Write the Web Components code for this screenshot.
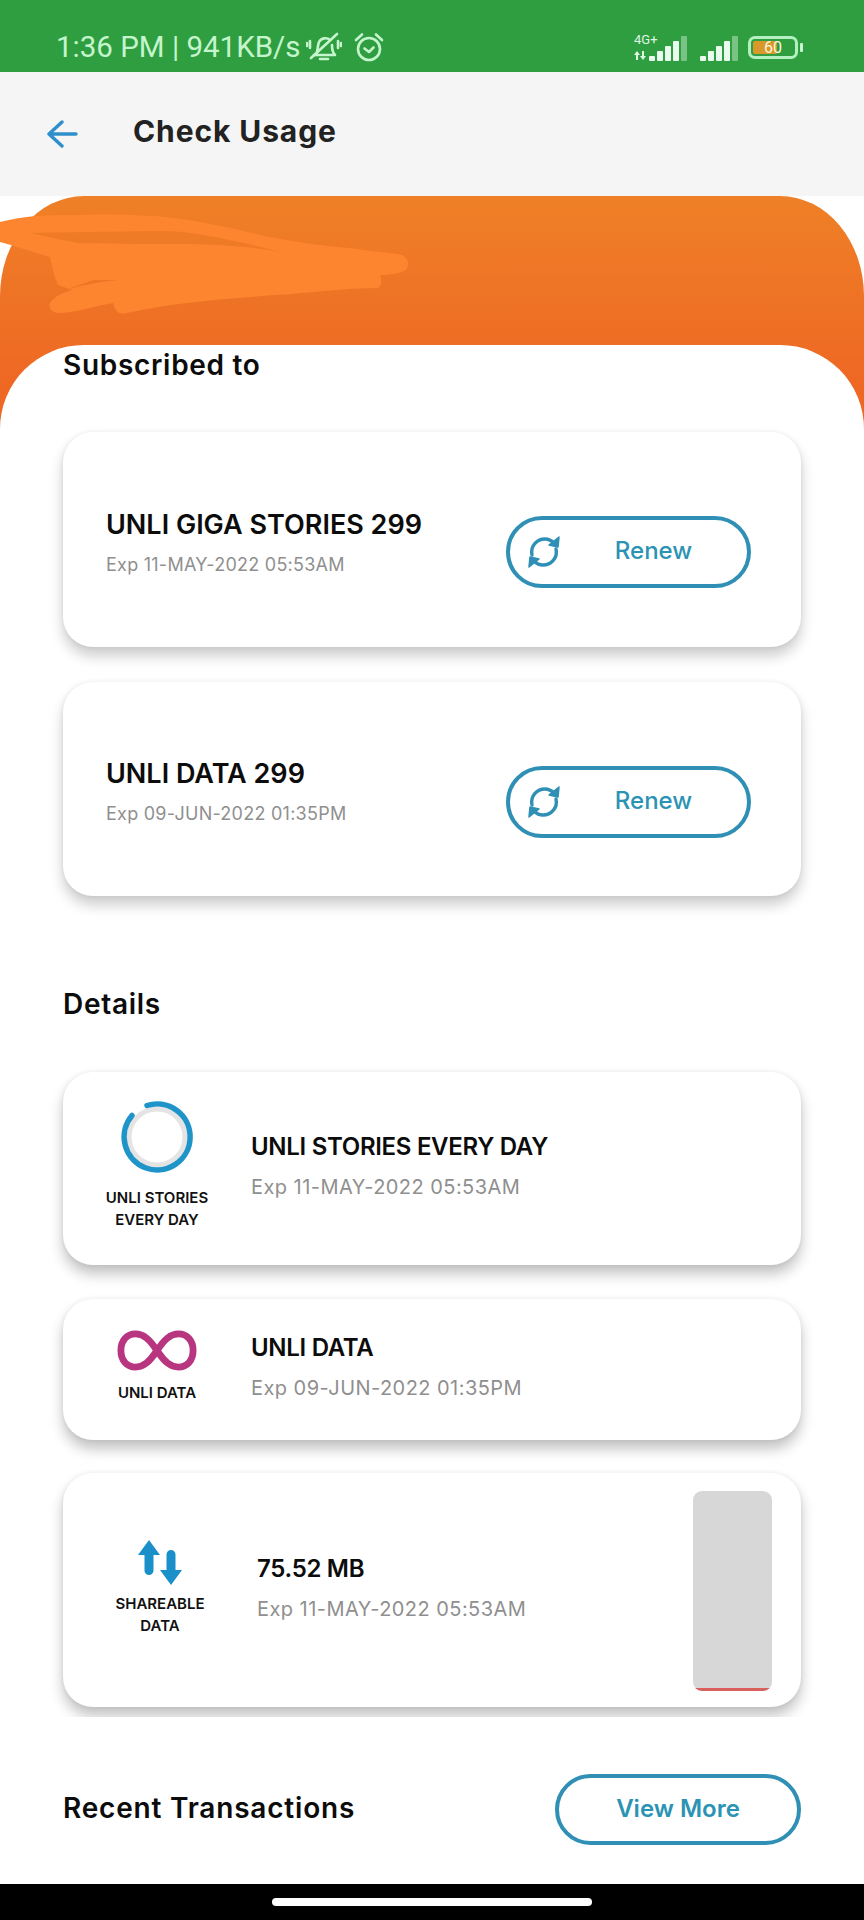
<!DOCTYPE html>
<html lang="en">
<head>
<meta charset="utf-8">
<title>Check Usage</title>
<style>
  html, body { margin: 0; padding: 0; background: #fff; }
  body { width: 864px; height: 1920px; overflow: hidden; display: flex; flex-direction: column; font-family: "Inter", "Noto Sans", sans-serif; }
  body > * { flex: none; }
  nav-bar { margin-top: auto; }
</style>
</head>
<body>
  <status-bar></status-bar>
  <app-header>Check Usage</app-header>
  <usage-list>
    <section-title style="--top: 0px">Subscribed to</section-title>
    <plan-card style="--top: 47px; --h: 215px" name="UNLI GIGA STORIES 299" exp="Exp 11-MAY-2022 05:53AM"></plan-card>
    <plan-card style="--top: 35px; --h: 214px" name="UNLI DATA 299" exp="Exp 09-JUN-2022 01:35PM"></plan-card>
    <section-title style="--top: 88px">Details</section-title>
    <detail-card style="--top: 48px; --h: 193px; --icon-w: 188px; --gap: 12px; --nudge: -8px" name="UNLI STORIES EVERY DAY" exp="Exp 11-MAY-2022 05:53AM">
      <svg slot="icon" width="76" height="76" viewBox="0 0 76 76" fill="none">
        <circle cx="38" cy="38" r="28" stroke="#e4e4e4" stroke-width="5"/>
        <path d="M28 6.500A33 33 0 1 1 13 16.500" stroke="#1f94c9" stroke-width="5.500" stroke-linecap="round"/>
      </svg>
      <span slot="label">UNLI STORIES<br>EVERY DAY</span>
    </detail-card>
    <detail-card style="--top: 34px; --h: 141px; --icon-w: 188px; --gap: 10px; --nudge: -7px" name="UNLI DATA" exp="Exp 09-JUN-2022 01:35PM">
      <svg slot="icon" width="80" height="43" viewBox="0 0 82 44" fill="none">
        <path d="M41 22C33 10 27 5 19 5C10 5 4 12 4 22C4 32 10 39 19 39C27 39 33 34 41 22C49 10 55 5 63 5C72 5 78 12 78 22C78 32 72 39 63 39C55 39 49 34 41 22Z" stroke="#b8357f" stroke-width="7"/>
      </svg>
      <span slot="label">UNLI DATA</span>
    </detail-card>
    <detail-card style="--top: 33px; --h: 234px; --icon-w: 194px; --gap: 7px; --nudge: -4px" name="75.52 MB" exp="Exp 11-MAY-2022 05:53AM" gauge>
      <svg slot="icon" width="46" height="46" viewBox="0 0 46 46" fill="#1a8fc9">
        <path d="M12 0L23 15H16.500V30.500A4.500 4.500 0 0 1 7.500 30.500V15H1Z"/>
        <path d="M34 45L45 30H38.500V14.500A4.500 4.500 0 0 0 29.500 14.500V30H23Z"/>
      </svg>
      <span slot="label">SHAREABLE<br>DATA</span>
    </detail-card>
  </usage-list>
  <recent-row></recent-row>
  <nav-bar></nav-bar>

<script>
class StatusBar extends HTMLElement {
  constructor() {
    super();
    const bars = () => [0, 1, 2, 3, 4].map((i) => {
      const h = 5 + i * 5;
      return `<rect x="${i * 8}" y="${25 - h}" width="6" height="${h}" rx="1" fill="#e9fbec" opacity="${i === 4 ? 0.4 : 1}"/>`;
    }).join("");
    this.attachShadow({ mode: "open" }).innerHTML = `
      <style>
        :host {
          display: flex;
          align-items: center;
          box-sizing: border-box;
          height: 72px;
          padding: 22px 61px 0 56px;
          background: #2f9e41;
          color: #c5f5cc;
          font: 400 29.500px "Roboto", sans-serif;
        }
        .time { margin-right: 6px; white-space: nowrap; }
        svg { display: block; flex: none; }
        .right { margin-left: auto; display: flex; align-items: flex-end; }
        .net { position: relative; width: 54px; height: 27px; margin-right: 12px; }
        .net span { position: absolute; left: 0; top: -1px; font-size: 13px; line-height: 13px; color: #dff8e3; }
        .net svg { position: absolute; right: 0; bottom: 0; }
        .net .arrows { right: auto; left: 0; bottom: 1px; }
        .battery {
          position: relative;
          box-sizing: border-box;
          width: 50px;
          height: 23px;
          margin-left: 9px;
          margin-bottom: 2px;
          border: 3px solid #b5f0c0;
          border-radius: 7px;
          padding: 2px;
        }
        .battery i { display: block; width: 60%; height: 100%; background: #d9982a; border-radius: 2px; }
        .battery b {
          position: absolute;
          inset: 0;
          text-align: center;
          font: 400 16px/17px "Roboto", sans-serif;
          color: #fdf6d8;
        }
        .nub { width: 3px; height: 9px; margin: 0 0 9px 2px; background: #c8f3d0; border-radius: 1px; }
      </style>
      <span class="time">1:36 PM | 941KB/s</span>
      <svg width="36" height="32" viewBox="0 0 36 32" fill="none" stroke="#c5f5cc" stroke-width="2.600" stroke-linecap="round" stroke-linejoin="round">
        <path d="M10 24C12 20 11.500 14 13 11C15 7 21 6 24 9"/>
        <path d="M26 14C26 18 26 21 29 24H8"/>
        <path d="M14 28H22"/>
        <path d="M5 27L31 3"/>
        <path d="M4 10V17M1 12V15M32 10V17M35 12V15"/>
      </svg>
      <svg style="margin-left:12px" width="30" height="31" viewBox="0 0 30 31" fill="none" stroke="#c5f5cc" stroke-width="2.600" stroke-linecap="round" stroke-linejoin="round">
        <circle cx="15" cy="17" r="11"/>
        <path d="M10.500 16.500L15 20L19.500 15.500"/>
        <path d="M2 8L8 2.500M28 8L22 2.500"/>
      </svg>
      <div class="right">
        <div class="net">
          <span>4G+</span>
          <svg class="arrows" width="12" height="9" viewBox="0 0 12 9" fill="#dff8e3"><path d="M3 0L6 4H4V9H2V4H0ZM9 9L6 5H8V0H10V5H12Z"/></svg>
          <svg width="39" height="25" viewBox="0 0 39 25">${bars()}</svg>
        </div>
        <svg width="39" height="25" viewBox="0 0 39 25">${bars()}</svg>
        <div class="battery"><i></i><b>60</b></div>
        <div class="nub"></div>
      </div>
    `;
  }
}
customElements.define("status-bar", StatusBar);

class AppHeader extends HTMLElement {
  constructor() {
    super();
    this.attachShadow({ mode: "open" }).innerHTML = `
      <style>
        :host {
          display: flex;
          align-items: center;
          box-sizing: border-box;
          height: 124px;
          padding: 0 0 6px 47px;
          background: #f5f5f5;
        }
        svg { display: block; margin-top: 6px; }
        .title { margin-left: 55px; font: 700 30px "Inter", sans-serif; color: #222; letter-spacing: 0.9px; }
      </style>
      <svg width="31" height="28" viewBox="0 0 31 28" fill="none" stroke="#2f8fca" stroke-width="3.400" stroke-linecap="round" stroke-linejoin="round">
        <path d="M2 14H29M15 2L2 14L15 26"/>
      </svg>
      <div class="title"><slot></slot></div>
    `;
  }
}
customElements.define("app-header", AppHeader);

class UsageList extends HTMLElement {
  constructor() {
    super();
    this.attachShadow({ mode: "open" }).innerHTML = `
      <style>
        :host { display: block; height: 1521px; overflow: hidden; }
        .hero {
          position: relative;
          height: 234px;
          border-radius: 84px 84px 0 0 / 100px 100px 0 0;
          background: linear-gradient(#ef8027, #ee6824 80%);
        }
        .scribble { position: absolute; left: 0; top: 0; }
        .sheet {
          position: relative;
          margin-top: -85px;
          padding: 0 63px 12px 63px;
          background: #fff;
          border-radius: 84px 84px 0 0;
        }
      </style>
      <div class="hero">
        <svg class="scribble" width="864" height="234" viewBox="0 0 864 234" fill="#fd8530" fill-rule="evenodd">
          <path d="M0 26C30 18 60 19 83 19C115 18 140 19 165 21C195 24 222 30 248 36C290 46 325 50 350 52C375 56 395 57 402 59C410 63 410 72 404 75C395 79 385 79 380 79C382 84 382 90 378 92C345 92 310 97 275 99C225 103 170 107 127 117C120 119 115 116 113 107C95 110 78 116 60 117C50 117 48 110 50 107C55 100 62 97 72 94L58 89C52 75 52 68 50 61C32 56 15 50 0 46ZM30 37L83 36L160 35C190 35 220 41 281 56C250 50 220 49 190 48L138 48L77 47ZM66 94C75 91 95 86 118 84L94 84C85 87 75 90 66 94Z"/>
        </svg>
      </div>
      <div class="sheet"><slot></slot></div>
    `;
  }
}
customElements.define("usage-list", UsageList);

class SectionTitle extends HTMLElement {
  constructor() {
    super();
    this.attachShadow({ mode: "open" }).innerHTML = `
      <style>
        :host {
          display: block;
          margin-top: var(--top, 0);
          height: 40px;
          font: 600 28px/40px "Inter", sans-serif;
          color: #0c0c0c;
          letter-spacing: 0.7px;
        }
      </style>
      <slot></slot>
    `;
  }
}
customElements.define("section-title", SectionTitle);

class PillButton extends HTMLElement {
  constructor() {
    super();
    this.attachShadow({ mode: "open" }).innerHTML = `
      <style>
        :host {
          display: flex;
          align-items: center;
          justify-content: center;
          position: relative;
          box-sizing: border-box;
          width: var(--w, 245px);
          height: var(--bh, 72px);
          padding-bottom: 3px;
          border: 4.500px solid #2f8fb5;
          border-radius: 40px;
          color: #2b93b3;
          font: 500 24px "Inter", sans-serif;
          flex: none;
        }
        ::slotted(svg) { position: absolute; left: 16px; top: 50%; transform: translateY(-50%); }
      </style>
      <slot name="icon"></slot>
      <slot></slot>
    `;
  }
}
customElements.define("pill-button", PillButton);

class PlanCard extends HTMLElement {
  constructor() {
    super();
    this.attachShadow({ mode: "open" }).innerHTML = `
      <style>
        :host {
          display: flex;
          align-items: center;
          justify-content: space-between;
          box-sizing: border-box;
          height: var(--h);
          margin-top: var(--top, 0);
          padding: 0 50px 0 43px;
          background: #fff;
          border-radius: 30px;
          box-shadow: 0 9px 14px rgba(0, 0, 0, .2), 0 0 5px rgba(0, 0, 0, .07);
        }
        .name { font: 600 27px/34px "Inter", sans-serif; color: #0c0c0c; white-space: nowrap; }
        .exp { margin-top: 11px; font: 400 18px/24px "Inter", sans-serif; color: #8f8f8f; letter-spacing: 0.25px; white-space: nowrap; }
        .text { margin-top: 5px; }
        pill-button { margin-top: 25px; }
        pill-button span { padding-left: 50px; }
      </style>
      <div class="text"><div class="name"></div><div class="exp"></div></div>
      <pill-button>
        <svg slot="icon" width="36" height="36" viewBox="0 0 36 36" fill="none" stroke="#2f8fb5" stroke-width="3.400" stroke-linecap="round">
          <path d="M6 21C4 12 11 5 19 5C23 5 26 7 28 9"/>
          <path d="M30 15C32 24 25 31 17 31C13 31 10 29 8 27"/>
          <path d="M33 3L32 13L23 11Z" fill="#2f8fb5" stroke-width="1.500" stroke-linejoin="round"/>
          <path d="M3 33L4 23L13 25Z" fill="#2f8fb5" stroke-width="1.500" stroke-linejoin="round"/>
        </svg>
        <span>Renew</span>
      </pill-button>
    `;
    this.shadowRoot.querySelector(".name").textContent = this.getAttribute("name");
    this.shadowRoot.querySelector(".exp").textContent = this.getAttribute("exp");
  }
}
customElements.define("plan-card", PlanCard);

class DetailCard extends HTMLElement {
  constructor() {
    super();
    const gauge = this.hasAttribute("gauge") ? `<div class="gauge"><i></i></div>` : "";
    this.attachShadow({ mode: "open" }).innerHTML = `
      <style>
        :host {
          display: flex;
          align-items: center;
          box-sizing: border-box;
          height: var(--h);
          margin-top: var(--top, 0);
          background: #fff;
          border-radius: 30px;
          box-shadow: 0 9px 14px rgba(0, 0, 0, .24), 0 0 5px rgba(0, 0, 0, .07);
        }
        .icon {
          width: var(--icon-w);
          flex: none;
          display: flex;
          flex-direction: column;
          align-items: center;
          text-align: center;
          font: 600 15px/22px "Inter", sans-serif;
          color: #111;
          margin-top: var(--nudge, -4px);
        }
        .label { margin-top: var(--gap, 10px); white-space: nowrap; }
        ::slotted(svg) { display: block; }
        .text { margin-top: -6px; }
        .name { font: 600 24px/32px "Inter", sans-serif; color: #0c0c0c; letter-spacing: -0.3px; white-space: nowrap; }
        .exp { margin-top: 11px; font: 400 20px/26px "Inter", sans-serif; color: #8f8f8f; letter-spacing: 0.45px; white-space: nowrap; }
        .gauge {
          margin: 2px 29px 0 auto;
          width: 79px;
          height: 200px;
          border-radius: 9px;
          background: #d7d7d7;
          overflow: hidden;
          display: flex;
          align-items: flex-end;
        }
        .gauge i { display: block; width: 100%; height: 3px; background: #d9605c; }
      </style>
      <div class="icon"><slot name="icon"></slot><div class="label"><slot name="label"></slot></div></div>
      <div class="text"><div class="name"></div><div class="exp"></div></div>
      ${gauge}
    `;
    this.shadowRoot.querySelector(".name").textContent = this.getAttribute("name");
    this.shadowRoot.querySelector(".exp").textContent = this.getAttribute("exp");
  }
}
customElements.define("detail-card", DetailCard);

class RecentRow extends HTMLElement {
  constructor() {
    super();
    this.attachShadow({ mode: "open" }).innerHTML = `
      <style>
        :host {
          display: flex;
          align-items: center;
          justify-content: space-between;
          height: 71px;
          margin-top: 57px;
          padding: 0 63px;
        }
        .title { font: 600 28px "Inter", sans-serif; color: #0c0c0c; letter-spacing: 0.8px; margin-top: -3px; }
        pill-button { --w: 246px; --bh: 71px; font-weight: 600; }
      </style>
      <div class="title">Recent Transactions</div>
      <pill-button>View More</pill-button>
    `;
  }
}
customElements.define("recent-row", RecentRow);

class NavBar extends HTMLElement {
  constructor() {
    super();
    this.attachShadow({ mode: "open" }).innerHTML = `
      <style>
        :host {
          display: flex;
          justify-content: center;
          box-sizing: border-box;
          height: 36px;
          padding-top: 14px;
          background: #000;
        }
        div { width: 320px; height: 8px; background: #fff; border-radius: 4px; }
      </style>
      <div></div>
    `;
  }
}
customElements.define("nav-bar", NavBar);
</script>
</body>
</html>
